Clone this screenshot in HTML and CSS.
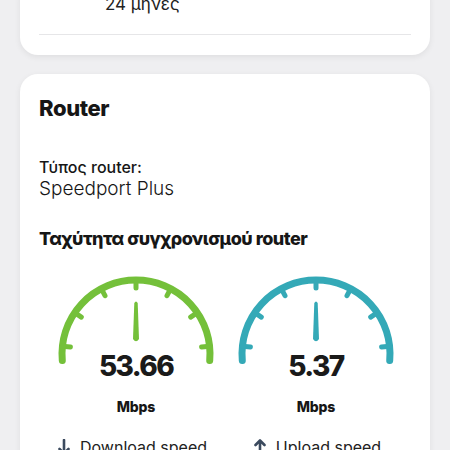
FILE: index.html
```html
<!DOCTYPE html>
<html lang="el">
<head>
    <meta charset="utf-8">
    <title>Router</title>
    <link rel="stylesheet" href="styles.css">
</head>
<body>
<div class="page">
    <div class="card first">
        <div class="value-row">24 μηνες</div>
        <div class="divider"></div>
    </div>

    <div class="card">
        <h2 class="card-title">Router</h2>
        <div class="label">Τύπος router:</div>
        <div class="value">Speedport Plus</div>

        <h3 class="section-title">Ταχύτητα συγχρονισμού router</h3>

        <div class="gauges">
            <div class="gauge green">
                <svg width="160" height="96" viewBox="0 0 160 96">
                    <path class="arc" d="M6.28 89.45 A74 74 0 1 1 153.72 89.45"/>
                    <g class="ticks">
                        <line x1="153.6" y1="75.3" x2="145.6" y2="76.1"/>
                        <line x1="141.3" y1="41.6" x2="134.7" y2="46.1"/>
                        <line x1="114.7" y1="17.7" x2="111" y2="24.7"/>
                        <line x1="80" y1="9" x2="80" y2="17"/>
                        <line x1="45.3" y1="17.7" x2="49" y2="24.7"/>
                        <line x1="18.7" y1="41.6" x2="25.3" y2="46.1"/>
                        <line x1="6.4" y1="75.3" x2="14.4" y2="76.1"/>
                    </g>
                    <path class="needle" d="M78.3 32 Q80 29 81.7 32 L83 68 Q80 72.5 77 68 Z"/>
                </svg>
                <div class="speed">53.66</div>
                <div class="unit">Mbps</div>
                <div class="direction down">
                    <svg width="14" height="16" viewBox="0 0 14 16"><path d="M7 1 V14 M2.5 10 L7 14.5 L11.5 10"/></svg>
                    Download speed
                </div>
            </div>
            <div class="gauge teal">
                <svg width="160" height="96" viewBox="0 0 160 96">
                    <path class="arc" d="M6.28 89.45 A74 74 0 1 1 153.72 89.45"/>
                    <g class="ticks">
                        <line x1="153.6" y1="75.3" x2="145.6" y2="76.1"/>
                        <line x1="141.3" y1="41.6" x2="134.7" y2="46.1"/>
                        <line x1="114.7" y1="17.7" x2="111" y2="24.7"/>
                        <line x1="80" y1="9" x2="80" y2="17"/>
                        <line x1="45.3" y1="17.7" x2="49" y2="24.7"/>
                        <line x1="18.7" y1="41.6" x2="25.3" y2="46.1"/>
                        <line x1="6.4" y1="75.3" x2="14.4" y2="76.1"/>
                    </g>
                    <path class="needle" d="M78.3 32 Q80 29 81.7 32 L83 68 Q80 72.5 77 68 Z"/>
                </svg>
                <div class="speed">5.37</div>
                <div class="unit">Mbps</div>
                <div class="direction up">
                    <svg width="14" height="16" viewBox="0 0 14 16"><path d="M7 15 V2 M2.5 6 L7 1.5 L11.5 6"/></svg>
                    Upload speed
                </div>
            </div>
        </div>
    </div>
</div>
</body>
</html>
```

FILE: styles.css
```css
html, body {
    margin: 0;
    padding: 0;
    background: #efeff1;
}
body {
    font-family: Inter, "Noto Sans", sans-serif;
    color: #161616;
}
.page {
    padding: 0 20px;
}
.card {
    background: #fff;
    border-radius: 18px;
    box-shadow: 0 2px 6px rgba(0, 0, 0, 0.07);
    padding: 20px 19px 20px;
    margin-bottom: 19px;
}
.card.first {
    margin-top: -20px;
    padding-top: 14px;
}
.value-row {
    font-size: 17px;
    line-height: 20px;
    padding-left: 66px;
    color: #222;
}
.divider {
    border-top: 1px solid #e6e6e8;
    margin-top: 20px;
}

.card-title {
    margin: 0;
    font-size: 22px;
    line-height: 28px;
    font-weight: 800;
    letter-spacing: -0.4px;
}
.label {
    margin-top: 35px;
    font-size: 16px;
    line-height: 20px;
    font-weight: 500;
}
.value {
    font-size: 19px;
    line-height: 24px;
    font-weight: 300;
}
.section-title {
    margin: 26px 0 0;
    font-size: 18px;
    line-height: 24px;
    font-weight: 800;
    letter-spacing: -0.5px;
}

.gauges {
    display: flex;
    padding-left: 7px;
    margin-top: 20px;
}
.gauge {
    width: 180px;
    display: flex;
    flex-direction: column;
    align-items: center;
}
.gauge svg {
    display: block;
}
.arc {
    fill: none;
    stroke-width: 7;
    stroke-linecap: round;
}
.ticks line {
    stroke-width: 5;
    stroke-linecap: round;
}
.green .arc, .green .ticks line { stroke: #74c03a; }
.green .needle { fill: #74c03a; }
.teal .arc, .teal .ticks line { stroke: #34a9b7; }
.teal .needle { fill: #34a9b7; }

.speed {
    margin-top: -17px;
    font-size: 28px;
    line-height: 32px;
    font-weight: 800;
    letter-spacing: -1.6px;
    color: #1a1a1a;
}
.unit {
    margin-top: 16px;
    font-size: 14px;
    line-height: 18px;
    font-weight: 800;
    letter-spacing: -0.2px;
}
.direction {
    margin-top: 21px;
    display: flex;
    align-items: center;
    gap: 9px;
    font-size: 16px;
    line-height: 20px;
    color: #222;
}
.direction.down {
    margin-right: 8px;
}
.direction.up {
    margin-left: 2px;
}
.direction svg path {
    fill: none;
    stroke: #3b4a5e;
    stroke-width: 2.6;
    stroke-linecap: round;
    stroke-linejoin: round;
}
```
